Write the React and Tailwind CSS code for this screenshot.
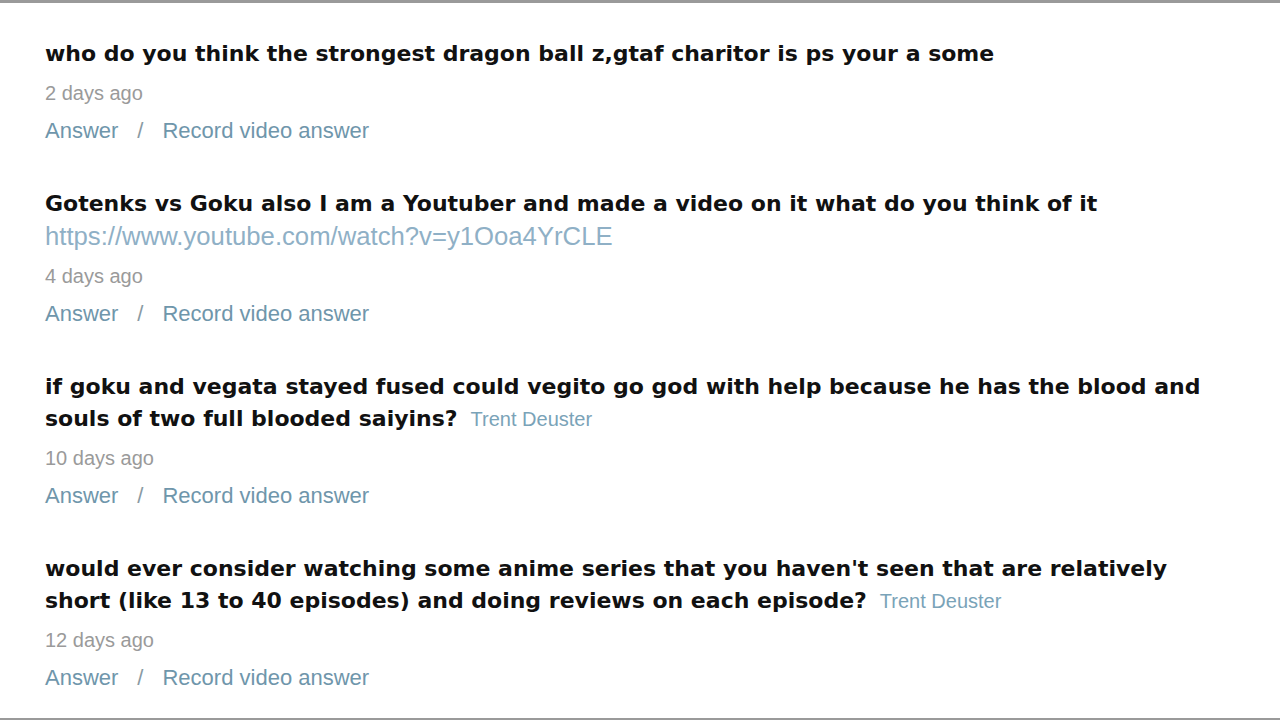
const questions = [
  {
    title: 'who do you think the strongest dragon ball z,gtaf charitor is ps your a some',
    when: '2 days ago',
  },
  {
    title: 'Gotenks vs Goku also I am a Youtuber and made a video on it what do you think of it',
    link: 'https://www.youtube.com/watch?v=y1Ooa4YrCLE',
    when: '4 days ago',
  },
  {
    title: 'if goku and vegata stayed fused could vegito go god with help because he has the blood and souls of two full blooded saiyins?',
    author: 'Trent Deuster',
    when: '10 days ago',
  },
  {
    title: "would ever consider watching some anime series that you haven't seen that are relatively short (like 13 to 40 episodes) and doing reviews on each episode?",
    author: 'Trent Deuster',
    when: '12 days ago',
  },
];

const Question = ({ q }) => (
  <div className="flex flex-col">
    <p className="font-['DejaVu_Sans',sans-serif] font-bold text-[22px] leading-[32px] text-[#111] max-w-[1190px]">
      <span>{q.title}</span>
      {q.author && (
        <span className="ml-[13px] font-['Liberation_Sans',sans-serif] font-normal text-[20px] leading-[24px] text-[#7aa3b8]">
          {q.author}
        </span>
      )}
    </p>
    {q.link && (
      <p className="font-['Liberation_Sans',sans-serif] text-[25.7px] leading-[33px] text-[#8fb0c6]">{q.link}</p>
    )}
    <p className="mt-[9px] font-['Liberation_Sans',sans-serif] text-[20px] leading-[28px] text-[#9a9a9a]">{q.when}</p>
    <div className="mt-[10px] flex items-center font-['Liberation_Sans',sans-serif] text-[22px] leading-[28px] text-[#6f96ab]">
      <span>Answer</span>
      <span className="mx-[19px] text-[#8a9aa3]">/</span>
      <span>Record video answer</span>
    </div>
  </div>
);

export default function App() {
  return (
    <div className="w-[1280px] h-[720px] bg-white flex flex-col border-t-[3px] border-b-[2px] border-[#9a9a9a]">
      <div className="flex flex-col gap-[43px] pl-[45px] pt-[35px]">
        {questions.map((q, i) => (
          <Question key={i} q={q} />
        ))}
      </div>
    </div>
  );
}
